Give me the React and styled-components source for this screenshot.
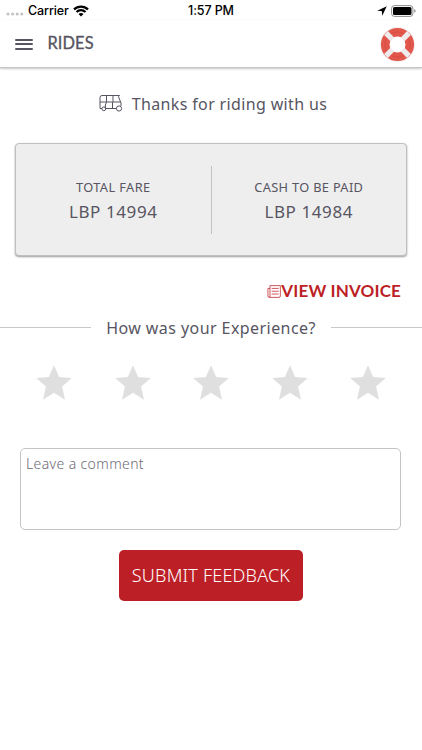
import React from "react";
import styled, { createGlobalStyle } from "styled-components";

const INK = "#575562";
const RED = "#bd1f26";

const GlobalStyle = createGlobalStyle`
  * { box-sizing: border-box; }
  body { margin: 0; background: #fff; }
`;

const Screen = styled.div`
  display: flex;
  flex-direction: column;
  width: 100%;
  max-width: 422px;
  height: 750px;
  overflow: hidden;
  background: #fff;
  color: ${INK};
  font-family: "Noto Sans", sans-serif;
`;

const StatusBar = styled.div`
  display: grid;
  grid-template-columns: 1fr auto 1fr;
  align-items: center;
  height: 20px;
  padding: 1px 6px 0 6px;
  color: #000;
  font: 500 12.5px/19px Inter, sans-serif;
  letter-spacing: -0.12px;
`;

const StatusLeft = styled.div`
  display: flex;
  align-items: center;
`;

const StatusRight = styled.div`
  display: flex;
  align-items: center;
  justify-content: flex-end;
  gap: 4px;
`;

const SignalDots = styled.svg`
  width: 18px;
  height: 4px;
  margin: 7px 4px 0 0;
`;

const WifiIcon = styled.svg`
  width: 16px;
  height: 12px;
  margin-left: 4px;
`;

const LocationIcon = styled.svg`
  width: 10px;
  height: 10px;
`;

const BatteryIcon = styled.svg`
  width: 25px;
  height: 12px;
`;

const Header = styled.header`
  display: flex;
  align-items: center;
  height: 48px;
  flex: none;
  padding: 0 7px 0 15px;
  border-bottom: 1px solid #c6c6c6;
  box-shadow: 0 1px 2px rgba(0, 0, 0, 0.22);
`;

const MenuButton = styled.button`
  display: flex;
  flex-direction: column;
  gap: 2px;
  width: 18px;
  margin-top: 1px;
  padding: 0;
  border: 0;
  background: none;
`;

const MenuLine = styled.span`
  height: 2px;
  border-radius: 1px;
  background: ${INK};

  & + & {
    margin-top: 0.5px;
  }
`;

const Title = styled.h1`
  flex: 1;
  margin: 0 0 2px 14.5px;
  font: 400 16.4px/20px Lato, sans-serif;
  letter-spacing: 0.1px;
  -webkit-text-stroke: 0.35px ${INK};
`;

const HelpIcon = styled.svg`
  width: 35px;
  height: 35px;
  margin-top: 1px;
`;

const Thanks = styled.div`
  display: flex;
  align-items: center;
  justify-content: center;
  gap: 9px;
  height: 24px;
  margin: 24px 0 0 4px;
  font-size: 16px;
  letter-spacing: 0.35px;
`;

const RickshawIcon = styled.svg`
  width: 24px;
  height: 18px;
  margin-bottom: 2px;
`;

const FareCard = styled.section`
  display: flex;
  align-items: center;
  height: 113px;
  flex: none;
  margin: 27px 15px 0;
  border: 1px solid #c0c0c0;
  border-radius: 4px;
  background: #eee;
  box-shadow: 0 1px 2px rgba(0, 0, 0, 0.4);
`;

const Fare = styled.div`
  display: flex;
  flex: 1;
  flex-direction: column;
  align-items: center;
  padding-top: 1px;
`;

const FareDivider = styled.div`
  width: 1px;
  height: 68px;
  background: #c2c2c2;
`;

const FareLabel = styled.div`
  margin-top: 1px;
  font-size: 12.8px;
  line-height: 20px;
  letter-spacing: ${(p) => p.$spacing};
`;

const FareAmount = styled.div`
  margin-top: 3px;
  font-size: 17px;
  line-height: 24px;
  letter-spacing: 0.6px;
`;

const InvoiceLink = styled.a`
  display: flex;
  align-items: center;
  align-self: flex-end;
  height: 24px;
  margin: 23px 21px 0 0;
  color: ${RED};
  font: 700 17px/24px Lato, sans-serif;
  letter-spacing: 0.15px;
`;

const InvoiceIcon = styled.svg`
  width: 14px;
  height: 15px;
`;

const Question = styled.div`
  display: flex;
  align-items: center;
  gap: 15px;
  height: 24px;
  margin-top: 12px;
  font-size: 16px;
  letter-spacing: 0.43px;
  white-space: nowrap;
`;

const Rule = styled.span`
  flex: 1;
  height: 1px;
  background: #c9c9c9;
`;

const QuestionText = styled.span`
  padding-top: 1px;
`;

const Stars = styled.div`
  display: flex;
  justify-content: space-between;
  margin: 26px 36px 0;
`;

const StarIcon = styled.svg`
  width: 36px;
  height: 35px;
  fill: #dfdfdf;
`;

const Comment = styled.textarea`
  display: block;
  height: 82px;
  flex: none;
  margin: 48px 21px 0 20px;
  padding: 5px 5px;
  border: 1px solid #c4c4c4;
  border-radius: 5px;
  outline: 0;
  resize: none;
  background: #fff;
  font: 300 14px/20px "Noto Sans", sans-serif;
  letter-spacing: 0.38px;

  &::placeholder {
    color: #6b6975;
    opacity: 1;
  }
`;

const SubmitButton = styled.button`
  align-self: center;
  width: 184px;
  height: 51px;
  margin-top: 20px;
  padding: 0;
  border: 0;
  border-radius: 5px;
  background: ${RED};
  color: #fff;
  font: 300 18px/51px "Noto Sans", sans-serif;
  letter-spacing: 0.2px;
`;

export default function App() {
  return (
    <>
      <GlobalStyle />
      <Screen>
        <StatusBar>
          <StatusLeft>
            <SignalDots viewBox="0 0 18 4" fill="#c4c4c4">
              {[2, 6.6, 11.2, 15.8].map((x) => (
                <circle key={x} cx={x} cy="2" r="1.6" />
              ))}
            </SignalDots>
            Carrier
            <WifiIcon viewBox="0 0 16 12" fill="none" stroke="#000" strokeWidth="2.2">
              <path d="M1 4.4a10 10 0 0 1 14 0" />
              <path d="M3.5 7a6.4 6.4 0 0 1 9 0" />
              <path d="M8 11.6 5.5 9.1a3.6 3.6 0 0 1 5 0z" fill="#000" stroke="none" />
            </WifiIcon>
          </StatusLeft>
          <span>1:57 PM</span>
          <StatusRight>
            <LocationIcon viewBox="0 0 10 10">
              <path d="M9.8.2.2 4.7l4.6.4.4 4.7z" />
            </LocationIcon>
            <BatteryIcon viewBox="0 0 25 12">
              <rect x=".6" y=".6" width="21.3" height="10.8" rx="2.8" fill="none" stroke="#8b8b8b" />
              <rect x="2" y="2" width="18.5" height="8" rx="1.5" />
              <path d="M23.2 4.2q1.5.5 1.5 1.8t-1.5 1.8z" fill="#8b8b8b" />
            </BatteryIcon>
          </StatusRight>
        </StatusBar>

        <Header>
          <MenuButton aria-label="Menu">
            <MenuLine />
            <MenuLine />
            <MenuLine />
          </MenuButton>
          <Title>RIDES</Title>
          <HelpIcon viewBox="0 0 35 35" fill="none">
            <circle cx="17.5" cy="17.5" r="16.9" fill="#fff" stroke="#e4dddd" strokeWidth=".6" />
            <circle cx="17.5" cy="17.5" r="12.3" stroke="#e2574c" strokeWidth="8.6" />
            <circle cx="17.5" cy="17.5" r="12.6" stroke="#d94d43" strokeWidth="1" />
            <path d="m6 6 6.3 6.3M29 6l-6.3 6.3M6 29l6.3-6.3M29 29l-6.3-6.3" stroke="#efeaec" strokeWidth="5.4" />
          </HelpIcon>
        </Header>

        <Thanks>
          <RickshawIcon viewBox="0 0 24 18" fill="none" stroke={INK} strokeWidth="1">
            <path d="M3 14.5H1V3.5q0-2 2-2h17.5l-1 1.2L22 9v3M6.7 14.5H17.4M1 8h6.5V1.5M7.5 8 6.4 11v3.5M7.5 8h6v6.5M14 1.5V8h7.5" />
            <circle cx="4.8" cy="14.8" r="1.9" />
            <circle cx="20" cy="14.5" r="2.6" />
          </RickshawIcon>
          Thanks for riding with us
        </Thanks>

        <FareCard>
          <Fare>
            <FareLabel $spacing="0.4px">TOTAL FARE</FareLabel>
            <FareAmount>LBP 14994</FareAmount>
          </Fare>
          <FareDivider />
          <Fare>
            <FareLabel $spacing="0.33px">CASH TO BE PAID</FareLabel>
            <FareAmount>LBP 14984</FareAmount>
          </Fare>
        </FareCard>

        <InvoiceLink>
          <InvoiceIcon viewBox="0 0 15 15" fill="none" stroke={RED} strokeWidth=".8">
            <path d="M3.2 4.2H1v8q0 1.6 1.5 1.6h10.3q1.5 0 1.5-1.5V1.2H3.2v11q0 1.6-1 1.6" />
            <path d="M5 4.2h7.5M5 7.2h7.5M5 10.2h7.5" />
          </InvoiceIcon>
          VIEW INVOICE
        </InvoiceLink>

        <Question>
          <Rule />
          <QuestionText>How was your Experience?</QuestionText>
          <Rule />
        </Question>

        <Stars>
          {[1, 2, 3, 4, 5].map((n) => (
            <StarIcon key={n} viewBox="0 0 36 35">
              <path d="m18 .2 5.1 11.8L35.8 13l-9.7 8.5L29 34.7l-11-6.9-11 6.9 2.9-13.2L.2 13l12.7-1z" />
            </StarIcon>
          ))}
        </Stars>

        <Comment placeholder="Leave a comment" />
        <SubmitButton>SUBMIT FEEDBACK</SubmitButton>
      </Screen>
    </>
  );
}
